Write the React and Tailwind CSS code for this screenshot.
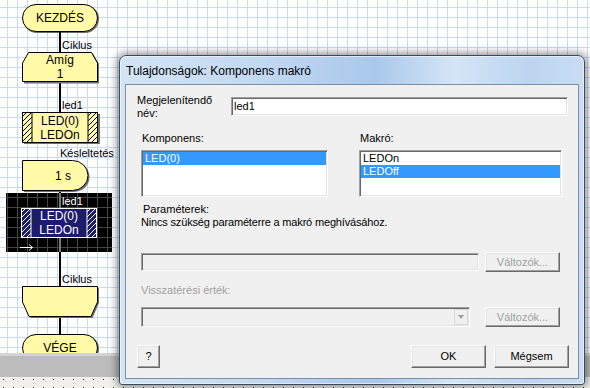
const Y = "#fff9a8";

function Conn({ h, label, dark, gray }) {
  return (
    <div className={`flex shrink-0 ${h}`}>
      <div className={`ml-[37px] w-[2px] ${gray ? "bg-[#7a7a7a]" : "bg-black"}`} />
      {label && (
        <span
          className={`self-end mb-px ml-px text-[11px] leading-[12px] whitespace-nowrap ${
            dark ? "text-white" : "text-black"
          }`}
        >
          {label}
        </span>
      )}
    </div>
  );
}

function Pill({ label }) {
  return (
    <div className="shrink-0 h-[28px] w-[76px] rounded-full border border-black bg-[#fff9a8] shadow-[1px_1px_0_#6a6a6a] flex items-center justify-center text-[12px] leading-[14px]">
      {label}
    </div>
  );
}

function LoopStart() {
  return (
    <div className="relative shrink-0 h-[30px] w-[76px] flex flex-col items-center text-[12px] leading-[14px] pt-[1px]">
      <svg className="absolute left-0 top-0 overflow-visible" width="76" height="30">
        <polygon points="7,1.5 71,1.5 77,12 77,31.5 2,31.5 2,12" fill="#6f6f6f" />
        <polygon points="6.5,0.5 69.5,0.5 75.5,11 75.5,29.5 0.5,29.5 0.5,11" fill={Y} stroke="#000" />
      </svg>
      <span className="relative">Amíg</span>
      <span className="relative">1</span>
    </div>
  );
}

function LoopEnd() {
  return (
    <div className="relative shrink-0 h-[31px] w-[76px]">
      <svg className="absolute left-0 top-0 overflow-visible" width="76" height="31">
        <polygon points="2,2 77,2 77,17 70.5,32 8.5,32 2,17" fill="#6f6f6f" />
        <polygon points="0.5,0.5 75.5,0.5 75.5,16 69,30.5 7,30.5 0.5,16" fill={Y} stroke="#000" />
      </svg>
    </div>
  );
}

function Delay() {
  return (
    <div className="relative shrink-0 h-[31px] w-[76px] flex items-center pl-[33px] text-[12px] leading-[14px]">
      <svg className="absolute left-0 top-0 overflow-visible" width="76" height="31">
        <path d="M2,2 H52 A15.5 15 0 0 1 52 32 H2 Z" fill="#6f6f6f" />
        <path d="M0.5,0.5 H50.5 A15.5 15 0 0 1 50.5 30.5 H0.5 Z" fill={Y} stroke="#000" />
      </svg>
      <span className="relative">1 s</span>
    </div>
  );
}

function MacroBox({ sel }) {
  const fill = sel ? "#1c1c6a" : Y;
  const stroke = sel ? "#ffffff" : "#000000";
  const id = sel ? "hatchW" : "hatchY";
  return (
    <div
      className={`relative shrink-0 w-[76px] flex flex-col items-center justify-center text-[12px] leading-[14px] ${
        sel ? "h-[30px] text-white" : "h-[31px] text-black"
      }`}
    >
      <svg className="absolute left-0 top-0 overflow-visible" width="76" height={sel ? 30 : 31}>
        <defs>
          <pattern id={id} width="5" height="5" patternUnits="userSpaceOnUse">
            <path d="M-1,1 L1,-1 M0,5 L5,0 M4,6 L6,4" stroke={stroke} strokeWidth="1" />
          </pattern>
        </defs>
        {!sel && <rect x="2" y="2" width="76" height="30" fill="#6f6f6f" />}
        <rect x="0.5" y="0.5" width="75" height={sel ? 29 : 30} fill={fill} stroke={stroke} />
        <rect x="0.5" y="0.5" width="9.5" height={sel ? 29 : 30} fill={`url(#${id})`} stroke={stroke} />
        <rect x="66" y="0.5" width="9.5" height={sel ? 29 : 30} fill={`url(#${id})`} stroke={stroke} />
      </svg>
      <span className="relative">LED(0)</span>
      <span className="relative">LEDOn</span>
    </div>
  );
}

function Canvas() {
  return (
    <div className="h-[353px] shrink-0 overflow-hidden bg-white bg-[linear-gradient(to_right,#c8dbf6_1px,transparent_1px),linear-gradient(to_bottom,#c8dbf6_1px,transparent_1px)] bg-[size:10px_10px] bg-[position:7px_7px]">
      <div className="flex flex-col w-[76px] ml-[22px] pt-[4px]">
        <Pill label="KEZDÉS" />
        <Conn h="h-[20px]" label="Ciklus" />
        <LoopStart />
        <Conn h="h-[30px]" label="led1" />
        <MacroBox />
        <Conn h="h-[17px]" label="Késleltetés" />
        <Delay />
        <Conn h="h-[2px]" />
        <div className="shrink-0 ml-[-16px] w-[106px] h-[59px] flex flex-col bg-black bg-[linear-gradient(to_right,#454545_1px,transparent_1px),linear-gradient(to_bottom,#454545_1px,transparent_1px)] bg-[size:10px_10px] bg-[position:1px_4px]">
          <div className="pl-[16px]">
            <Conn h="h-[15px]" label="led1" dark gray />
          </div>
          <div className="pl-[15px]">
            <MacroBox sel />
          </div>
          <div className="flex h-[14px]">
            <svg className="ml-[14px] mt-[6px]" width="14" height="7">
              <path d="M0,3.5 H12.5 M9,0.5 L12.5,3.5 L9,6.5" stroke="#fff" strokeWidth="1" fill="none" />
            </svg>
            <div className="ml-[25px] w-[2px] bg-[#7a7a7a]" />
          </div>
        </div>
        <Conn h="h-[34px]" label="Ciklus" />
        <LoopEnd />
        <Conn h="h-[17px]" />
        <Pill label="VÉGE" />
      </div>
    </div>
  );
}

const sunken =
  "border border-t-[#a0a0a0] border-l-[#a0a0a0] border-r-white border-b-white shadow-[inset_1px_1px_0_#696969,inset_-1px_-1px_0_#e3e3e3]";
const btn =
  "flex items-center justify-center border border-t-white border-l-white border-r-[#696969] border-b-[#696969] shadow-[inset_-1px_-1px_0_#a0a0a0,inset_1px_1px_0_#e3e3e3] bg-[#f0f0f0]";

function Dialog() {
  return (
    <div className="absolute left-[119px] top-[55px] w-[466px] h-[330px] flex flex-col rounded-t-[7px] rounded-b-[3px] border border-[#3a4b60] bg-[linear-gradient(to_right,#d3e4f6_0%,#c2d9f2_30%,#a9c8eb_55%,#d4e5f7_72%,#bcd5f0_88%,#c9ddf4_100%)] shadow-[inset_0_0_0_1px_rgba(255,255,255,0.55),0_0_9px_2px_rgba(0,0,0,0.45)]">
      <div className="h-[28px] shrink-0 flex items-center pl-[6px] pt-[1px] text-[12px] text-black whitespace-nowrap">
        Tulajdonságok: Komponens makró
      </div>
      <div className="mx-[5px] mb-[5px] flex-1 border border-[#7d8fa5] bg-[#f0f0f0] text-[11px] leading-[13px] text-black flex flex-col">
        <div className="flex ml-[11px] mt-[9px]">
          <div className="w-[94px]">
            Megjelenítendő
            <br />
            név:
          </div>
          <div className={`mt-[3px] w-[337px] h-[19px] bg-white pl-[2px] leading-[17px] ${sunken}`}>led1</div>
        </div>

        <div className="flex ml-[15px] mt-[12px] gap-[31px]">
          <div className="flex flex-col w-[187px]">
            <span className="pl-px">Komponens:</span>
            <div className={`mt-[5px] h-[47px] bg-white p-px ${sunken}`}>
              <div className="h-[13px] bg-[#3399ff] text-white pl-[2px]">LED(0)</div>
            </div>
          </div>
          <div className="flex flex-col w-[203px]">
            <span className="pl-px">Makró:</span>
            <div className={`mt-[5px] h-[47px] bg-white p-px ${sunken}`}>
              <div className="h-[13px] pl-[2px]">LEDOn</div>
              <div className="h-[13px] bg-[#3399ff] text-white pl-[2px]">LEDOff</div>
            </div>
          </div>
        </div>

        <span className="ml-[17px] mt-[6px]">Paraméterek:</span>
        <span className="ml-[15px] tracking-[-0.17px]">Nincs szükség paraméterre a makró meghívásához.</span>

        <div className="flex items-center ml-[15px] mt-[23px] gap-[6px]">
          <div className={`w-[338px] h-[18px] bg-[#f0f0f0] ${sunken}`} />
          <div className={`w-[75px] h-[20px] text-[#a0a0a0] ${btn}`}>Változók...</div>
        </div>

        <span className="ml-[15px] mt-[12px] text-[#a0a0a0]">Visszatérési érték:</span>

        <div className="flex items-center ml-[15px] mt-[10px] gap-[15px]">
          <div className={`w-[329px] h-[20px] bg-[#f0f0f0] p-px flex justify-end ${sunken}`}>
            <div className="w-[14px] h-full border border-[#dadada] flex items-center justify-center">
              <div className="w-0 h-0 border-x-[3.5px] border-x-transparent border-t-[4px] border-t-[#a0a0a0]" />
            </div>
          </div>
          <div className={`w-[75px] h-[20px] text-[#a0a0a0] ${btn}`}>Változók...</div>
        </div>

        <div className="flex ml-[11px] mt-[18px]">
          <div className={`w-[23px] h-[23px] ${btn}`}>?</div>
          <div className={`ml-[251px] w-[75px] h-[23px] ${btn}`}>OK</div>
          <div className={`ml-[8px] w-[75px] h-[23px] ${btn}`}>Mégsem</div>
        </div>
      </div>
    </div>
  );
}

export default function App() {
  return (
    <div className="relative w-[590px] h-[388px] overflow-hidden font-['Liberation_Sans',Arial,sans-serif] text-black">
      <div className="flex flex-col h-full">
        <Canvas />
        <div className="h-[24px] shrink-0 bg-[#bcbcbc] border-t-[3px] border-t-[#d4d4d4]" />
        <div className="flex-1 bg-[#f1f0ea]">
          <svg width="590" height="11">
            <defs>
              <pattern id="dots" width="10" height="8" patternUnits="userSpaceOnUse">
                <rect x="3" y="2" width="1" height="1" fill="#222" />
              </pattern>
            </defs>
            <rect width="590" height="11" fill="url(#dots)" />
          </svg>
        </div>
      </div>
      <Dialog />
    </div>
  );
}
